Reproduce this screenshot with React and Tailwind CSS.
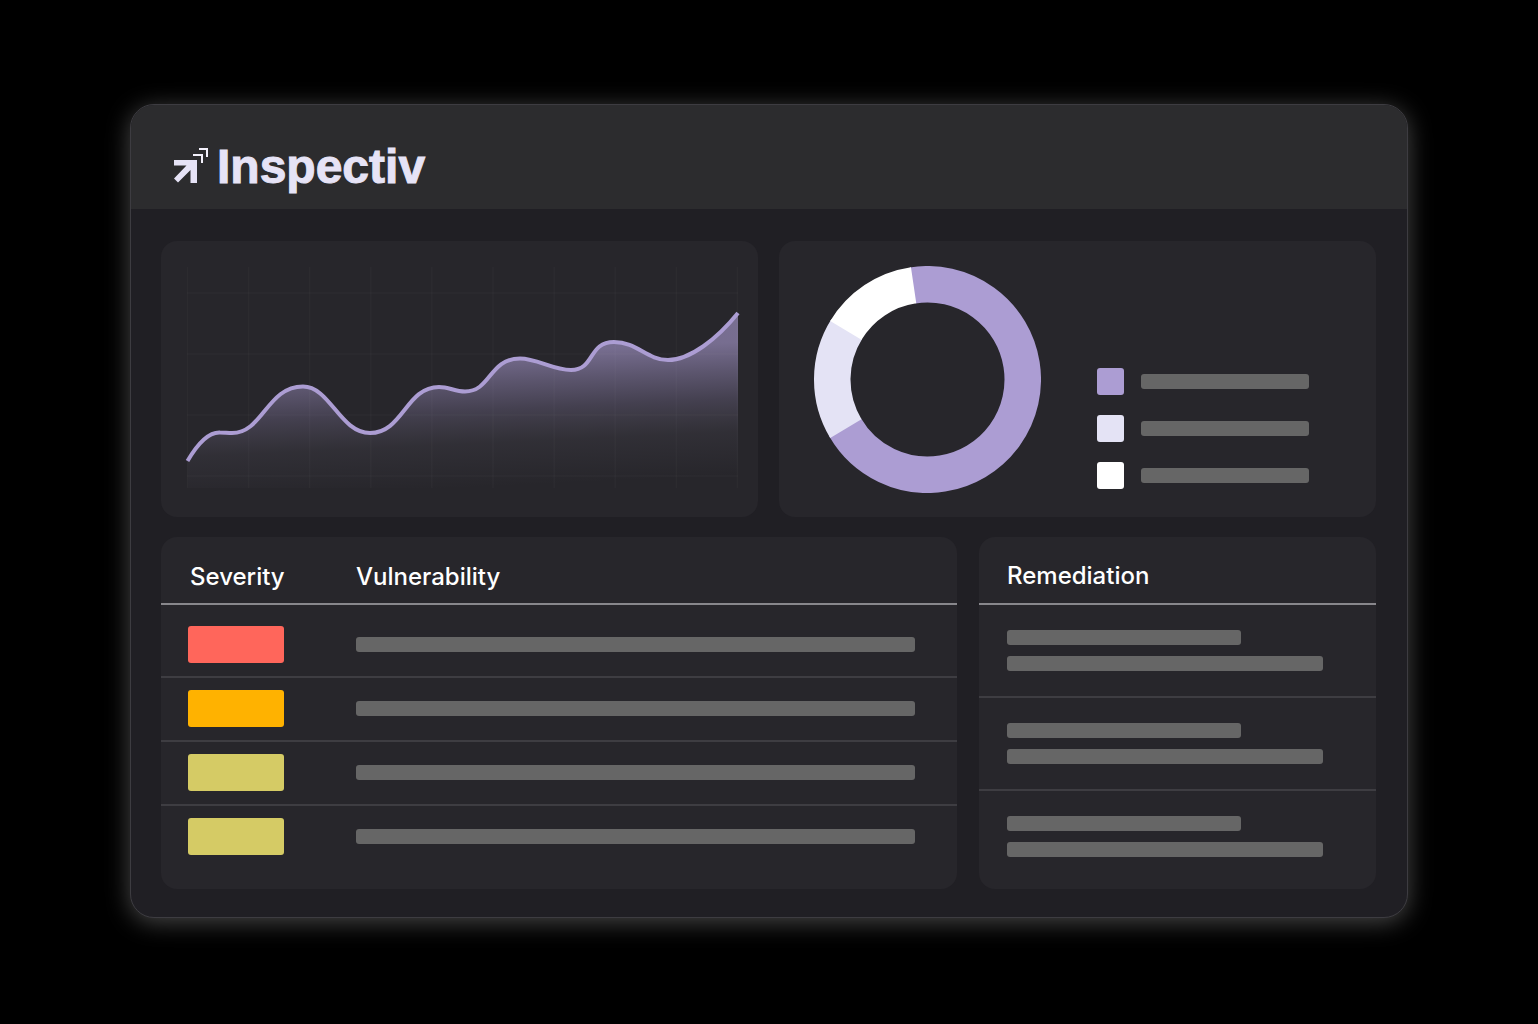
import React from "react";

const severities = [
  { id: 1, color: "bg-[#ff665b]" },
  { id: 2, color: "bg-[#ffb200]" },
  { id: 3, color: "bg-[#d5cb65]" },
  { id: 4, color: "bg-[#d5cb65]" },
];

const legend = ["bg-[#ac9dd3]", "bg-[#e4e3f5]", "bg-white"];

// start and end are degrees, clockwise from the top
// each slice runs a little under the next one so no seam shows
const slices = [
  { color: "#ac9dd3", start: -9, end: 240 },
  { color: "#e4e3f5", start: 239, end: 302 },
  { color: "#ffffff", start: 301, end: 351.6 },
];

const curve =
  "C11 176 22 165 33 165.5 C37 165.5 41 166 45 166 C76 166 80 119.5 116 119.5 C143 119.5 153 166 183 166 C216 166 219 120 252 120 C262 120 268 124.5 278 124.5 C304 124.5 302 91.5 333 91.5 C350 91.5 366 103 384 103 C408 103 401 75 427 75 C450 75 460 93 481 93 C503 93 530 72 551 46";

const Bar = ({ className }) => (
  <div className={`h-[15px] rounded-[3px] bg-[#666666] ${className}`} />
);

const Logo = () => (
  <div className="flex items-start text-[#e6e3f6]">
    <svg className="mt-1" width="36" height="36" viewBox="0 0 36 36" fill="none">
      <path d="M1 13H24V36H17.5V23L5 35.5L1 31.5L13.5 18.5H1Z" fill="currentColor" />
      <path d="M20 8H29V16" stroke="#f3f1fc" strokeWidth="2" />
      <path d="M26 2H34V10" stroke="#f3f1fc" strokeWidth="2" />
    </svg>
    <h1 className="ml-2 font-['Liberation_Sans',sans-serif] text-5xl font-bold [-webkit-text-stroke:1px_#e6e3f6]">
      Inspectiv
    </h1>
  </div>
);

const TrendChart = () => (
  <section className="rounded-2xl bg-[#27262b] pt-[26px] pr-5 pb-[29px] pl-[26px]">
    <svg viewBox="0 0 551 221" className="w-full overflow-visible" fill="none">
      <defs>
        <linearGradient
          id="area"
          gradientUnits="userSpaceOnUse"
          x1="270"
          y1="46"
          x2="278"
          y2="221"
        >
          <stop offset="0" stopColor="#ac9dd3" stopOpacity="0.62" />
          <stop offset="0.24" stopColor="#ac9dd3" stopOpacity="0.6" />
          <stop offset="0.4" stopColor="#ac9dd3" stopOpacity="0.4" />
          <stop offset="0.56" stopColor="#ac9dd3" stopOpacity="0.22" />
          <stop offset="0.75" stopColor="#9f98b4" stopOpacity="0.08" />
          <stop offset="1" stopColor="#9f98b4" stopOpacity="0" />
        </linearGradient>
      </defs>
      <path d={`M0.5 194 ${curve} V221 H0.5 Z`} fill="url(#area)" />
      <g stroke="#ffffff" strokeOpacity="0.025" strokeWidth="1.5">
        {[0, 1, 2, 3, 4, 5, 6, 7, 8, 9].map((n) => (
          <path key={n} d={`M${0.5 + n * 61.1} 0V221`} />
        ))}
        {[26, 87, 148, 209].map((y) => (
          <path key={y} d={`M0 ${y}H551`} />
        ))}
      </g>
      <path d={`M0.5 194 ${curve}`} stroke="#ac9dd3" strokeWidth="4" />
    </svg>
  </section>
);

const Donut = () => (
  <svg width="227" height="227" viewBox="0 0 227 227" fill="none">
    {slices.map(({ color, start, end }) => (
      <circle
        key={color}
        cx="113.5"
        cy="113.5"
        r="95.25"
        stroke={color}
        strokeWidth="36.5"
        pathLength="360"
        strokeDasharray={`${end - start} 360`}
        transform={`rotate(${start - 90} 113.5 113.5)`}
      />
    ))}
  </svg>
);

const Breakdown = () => (
  <section className="flex gap-14 rounded-2xl bg-[#27262b] pt-[25px] pb-6 pl-[35px]">
    <Donut />
    <ul className="flex flex-col justify-end gap-5 pb-1">
      {legend.map((color) => (
        <li key={color} className="flex items-center gap-[17px]">
          <span className={`size-[27px] rounded-[3px] ${color}`} />
          <Bar className="w-[168px]" />
        </li>
      ))}
    </ul>
  </section>
);

const VulnerabilityTable = () => (
  <section className="rounded-2xl bg-[#27262b] pb-[21px]">
    <table className="w-full border-separate border-spacing-0 text-left">
      <thead className="text-2xl font-medium">
        <tr>
          <th className="w-[195px] border-b-2 border-[#88878c] pt-6 pb-[10px] pl-[29px] font-medium">
            Severity
          </th>
          <th className="border-b-2 border-[#88878c] pt-6 pb-[10px] font-medium">
            Vulnerability
          </th>
        </tr>
      </thead>
      <tbody>
        {severities.map(({ id, color }) => (
          <tr
            key={id}
            className="[&>td]:border-b-2 [&>td]:border-[#3e3d42] [&>td]:pt-3 [&>td]:pb-[13px] first:[&>td]:pt-[21px] last:[&>td]:border-b-0"
          >
            <td className="pl-[27px]">
              <div className={`h-[37px] w-24 rounded-[3px] ${color}`} />
            </td>
            <td className="pr-[42px]">
              <Bar className="w-full" />
            </td>
          </tr>
        ))}
      </tbody>
    </table>
  </section>
);

const Remediation = () => (
  <section className="rounded-2xl bg-[#27262b]">
    <h2 className="border-b-2 border-[#88878c] pt-[23px] pb-[11px] pl-7 text-2xl font-medium">
      Remediation
    </h2>
    <ul>
      {[1, 2, 3].map((id) => (
        <li
          key={id}
          className="flex flex-col gap-[11px] border-b-2 border-[#3e3d42] py-[25px] pl-7 last:border-b-0"
        >
          <Bar className="w-[234px]" />
          <Bar className="w-[316px]" />
        </li>
      ))}
    </ul>
  </section>
);

function App() {
  return (
    <div className="min-h-screen bg-black px-[130px] py-[104px] font-['Inter',sans-serif] text-white">
      <main className="overflow-hidden rounded-3xl border border-[#3d3c41] bg-[#201f24] shadow-[0_4px_24px_rgba(255,255,255,0.28)]">
        <header className="bg-[#2c2c2e] pt-[38px] pb-[18px] pl-[42px]">
          <Logo />
        </header>
        <div className="flex flex-col gap-5 pt-8 pr-[31px] pb-7 pl-[30px]">
          <div className="grid grid-cols-2 gap-[21px]">
            <TrendChart />
            <Breakdown />
          </div>
          <div className="grid grid-cols-[796fr_397fr] gap-[22px]">
            <VulnerabilityTable />
            <Remediation />
          </div>
        </div>
      </main>
    </div>
  );
}

export default App;
